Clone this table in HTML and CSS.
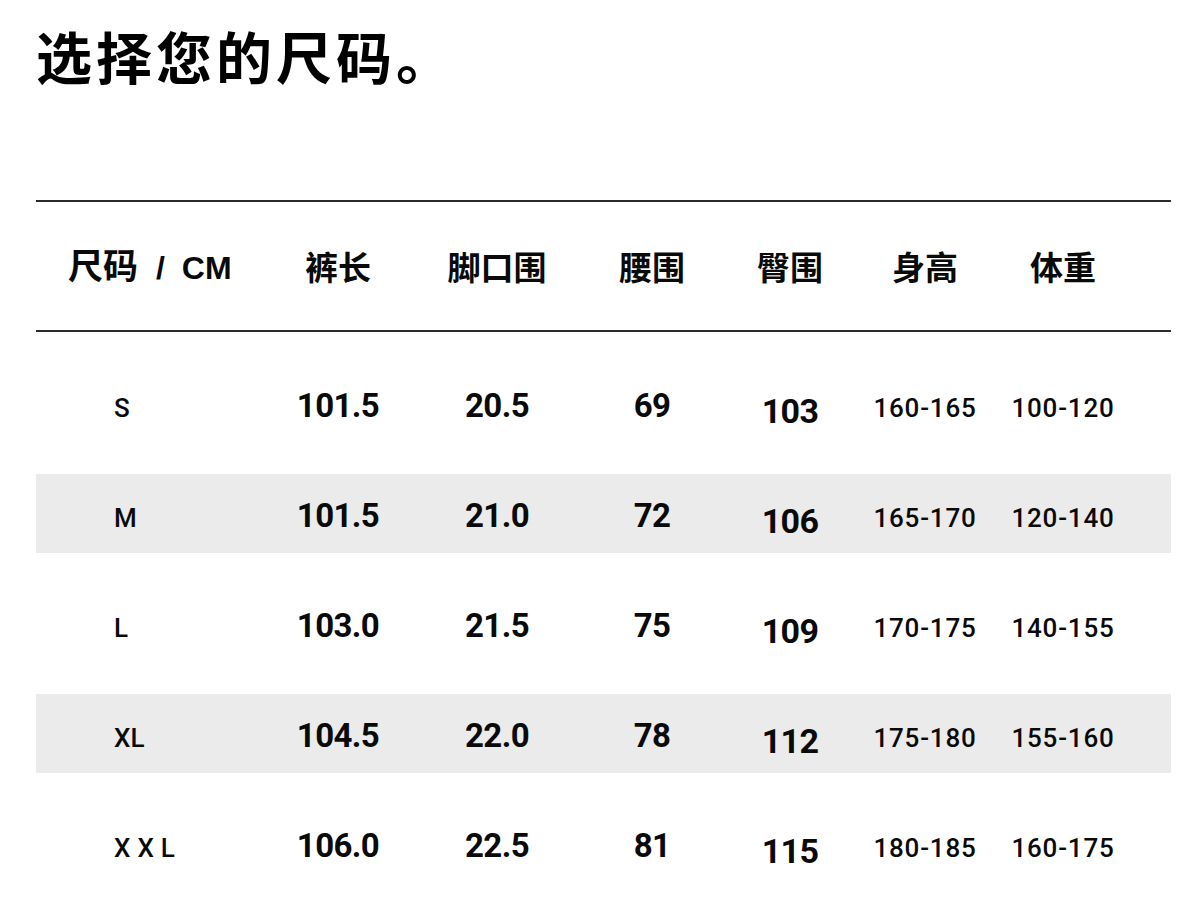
FILE: index.html
```html
<!DOCTYPE html>
<html lang="zh-CN">
<head>
<meta charset="utf-8">
<title>选择您的尺码</title>
<link rel="stylesheet" href="styles.css">
</head>
<body>
<main class="page">
  <h1 class="title">选择您的尺码。</h1>
  <section class="chart">
    <div class="row head">
      <div class="cell c1">尺码<span class="unit">/ CM</span></div>
      <div class="cell">裤长</div>
      <div class="cell">脚口围</div>
      <div class="cell">腰围</div>
      <div class="cell">臀围</div>
      <div class="cell">身高</div>
      <div class="cell">体重</div>
    </div>
    <div class="body">
      <div class="row data">
        <div class="cell c1 size">S</div>
        <div class="cell num">101.5</div>
        <div class="cell num">20.5</div>
        <div class="cell num">69</div>
        <div class="cell num"><span class="low">103</span></div>
        <div class="cell range">160-165</div>
        <div class="cell range">100-120</div>
      </div>
      <div class="row data alt">
        <div class="cell c1 size">M</div>
        <div class="cell num">101.5</div>
        <div class="cell num">21.0</div>
        <div class="cell num">72</div>
        <div class="cell num"><span class="low">106</span></div>
        <div class="cell range">165-170</div>
        <div class="cell range">120-140</div>
      </div>
      <div class="row data">
        <div class="cell c1 size">L</div>
        <div class="cell num">103.0</div>
        <div class="cell num">21.5</div>
        <div class="cell num">75</div>
        <div class="cell num"><span class="low">109</span></div>
        <div class="cell range">170-175</div>
        <div class="cell range">140-155</div>
      </div>
      <div class="row data alt">
        <div class="cell c1 size">XL</div>
        <div class="cell num">104.5</div>
        <div class="cell num">22.0</div>
        <div class="cell num">78</div>
        <div class="cell num"><span class="low">112</span></div>
        <div class="cell range">175-180</div>
        <div class="cell range">155-160</div>
      </div>
      <div class="row data">
        <div class="cell c1 size wide">XXL</div>
        <div class="cell num">106.0</div>
        <div class="cell num">22.5</div>
        <div class="cell num">81</div>
        <div class="cell num"><span class="low">115</span></div>
        <div class="cell range">180-185</div>
        <div class="cell range">160-175</div>
      </div>
    </div>
  </section>
</main>
</body>
</html>
```

FILE: styles.css
```css
* { box-sizing: border-box; }

html, body {
  margin: 0;
  padding: 0;
  background: #ffffff;
  color: #0a0a0a;
  font-family: Roboto, "Noto Sans CJK SC", sans-serif;
}

.page {
  width: 1200px;
  padding: 0 29px 0 36px;
}

.title {
  margin: 0;
  padding-top: 27px;
  font-family: "Noto Sans CJK SC", sans-serif;
  font-weight: 700;
  font-size: 56px;
  line-height: 1;
  letter-spacing: 4px;
  color: #000;
}

.chart {
  margin-top: 117px;
}

.row {
  display: grid;
  grid-template-columns: 223px 158px 160px 150px 126px 144px 132px 42px;
}

.cell {
  text-align: center;
  white-space: nowrap;
}

.cell.c1 {
  text-align: left;
}

.head {
  height: 132px;
  border-top: 2px solid #2b2b2b;
  border-bottom: 2px solid #2b2b2b;
  align-items: center;
  font-family: "Noto Sans CJK SC", sans-serif;
  font-weight: 700;
  font-size: 33px;
  line-height: 40px;
}

.head .c1 {
  padding-left: 32px;
  font-size: 35px;
}

.unit {
  font-family: "Liberation Sans", Arial, sans-serif;
  font-weight: 700;
  font-size: 32px;
  margin-left: 18px;
  word-spacing: 8px;
}

.body {
  display: flex;
  flex-direction: column;
  gap: 31px;
  margin-top: 32px;
}

.data {
  height: 79px;
  padding-top: 22px;
  align-items: baseline;
  line-height: 40px;
}

.data.alt {
  background: #ebebeb;
}

.size {
  padding-left: 78px;
  font-family: Roboto, sans-serif;
  font-weight: 500;
  font-size: 26px;
}

.size.wide {
  letter-spacing: 7px;
}

.num {
  font-family: Roboto, sans-serif;
  font-weight: 700;
  font-size: 33px;
  letter-spacing: -0.6px;
}

.low {
  display: inline-block;
  vertical-align: -6px;
  font-size: 34px;
}

.range {
  font-family: Roboto, sans-serif;
  font-weight: 500;
  font-size: 26px;
  letter-spacing: 0.8px;
}
```
